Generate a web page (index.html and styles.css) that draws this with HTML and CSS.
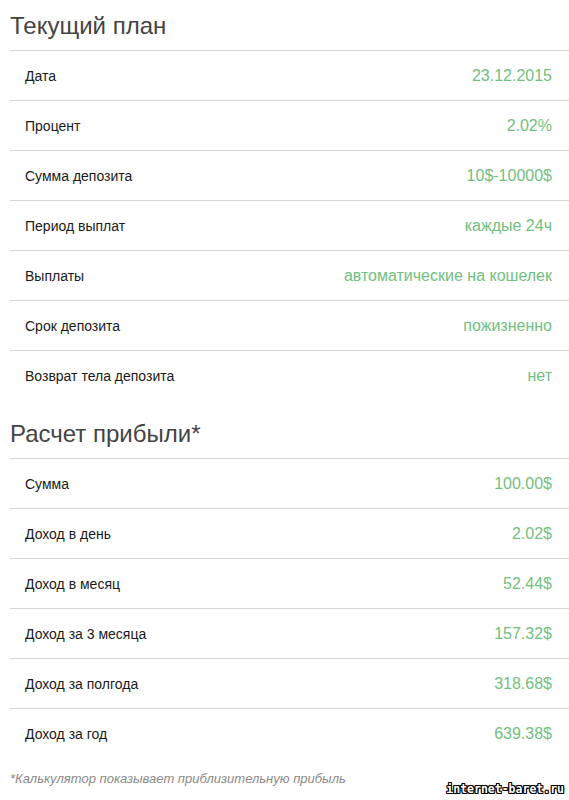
FILE: index.html
```html
<!DOCTYPE html>
<html lang="ru">
<head>
    <meta charset="UTF-8">
    <meta name="viewport" content="width=device-width, initial-scale=1.0">
    <title>Текущий план</title>
    <link rel="stylesheet" href="styles.css">
</head>
<body>
    <div class="page">
        <!-- Текущий план -->
        <section class="plan">
            <h2>Текущий план</h2>
            <div class="rows">
                <div class="row"><span class="label">Дата</span><span class="value">23.12.2015</span></div>
                <div class="row"><span class="label">Процент</span><span class="value">2.02%</span></div>
                <div class="row"><span class="label">Сумма депозита</span><span class="value">10$-10000$</span></div>
                <div class="row"><span class="label">Период выплат</span><span class="value">каждые 24ч</span></div>
                <div class="row"><span class="label">Выплаты</span><span class="value">автоматические на кошелек</span></div>
                <div class="row"><span class="label">Срок депозита</span><span class="value">пожизненно</span></div>
                <div class="row"><span class="label">Возврат тела депозита</span><span class="value">нет</span></div>
            </div>
        </section>

        <!-- Расчет прибыли -->
        <section class="plan profit">
            <h2>Расчет прибыли*</h2>
            <div class="rows">
                <div class="row"><span class="label">Сумма</span><span class="value">100.00$</span></div>
                <div class="row"><span class="label">Доход в день</span><span class="value">2.02$</span></div>
                <div class="row"><span class="label">Доход в месяц</span><span class="value">52.44$</span></div>
                <div class="row"><span class="label">Доход за 3 месяца</span><span class="value">157.32$</span></div>
                <div class="row"><span class="label">Доход за полгода</span><span class="value">318.68$</span></div>
                <div class="row"><span class="label">Доход за год</span><span class="value">639.38$</span></div>
            </div>
            <p class="note">*Калькулятор показывает приблизительную прибыль</p>
        </section>
    </div>
    <div class="watermark">internet-baret.ru</div>
</body>
</html>
```

FILE: styles.css
```css
body {
    margin: 0;
    font-family: 'Liberation Sans', Arial, sans-serif;
    background-color: #fff;
    color: #222;
}

.page {
    padding: 12px 0 0 10px;
}

h2 {
    margin: 0 0 10px;
    font-size: 24px;
    line-height: 28px;
    font-weight: normal;
    color: #444;
}

.profit {
    margin-top: 20px;
}

.row {
    display: flex;
    justify-content: space-between;
    align-items: center;
    height: 49px;
    padding: 0 17px 0 15px;
    border-top: 1px solid #d6d6d6;
}

.label {
    font-size: 14px;
    color: #1a1a1a;
}

.value {
    font-size: 16px;
    color: #72c07f;
}

.note {
    margin: 11px 0 0;
    font-size: 13px;
    line-height: 20px;
    font-style: italic;
    color: #8a8a8a;
}

/* водяной знак */
.watermark {
    position: absolute;
    right: 5px;
    top: 782px;
    font-family: 'DejaVu Sans Mono', monospace;
    font-weight: bold;
    font-size: 11.5px;
    color: #fff;
    text-shadow: 1px 0 #000, -1px 0 #000, 0 1px #000, 0 -1px #000,
                 1px 1px #000, -1px -1px #000, 1px -1px #000, -1px 1px #000;
}
```
